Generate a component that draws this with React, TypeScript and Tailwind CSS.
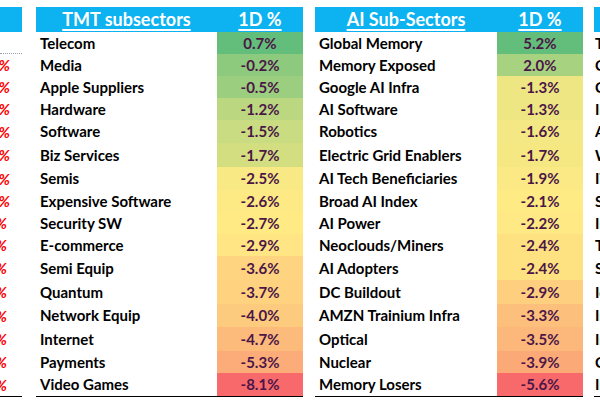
const heights = [22, 22, 22, 22, 23, 24, 23, 22, 22, 22, 24, 24, 23, 24, 22, 23];

const tmt: [string, number][] = [
  ["Telecom", 0.7],
  ["Media", -0.2],
  ["Apple Suppliers", -0.5],
  ["Hardware", -1.2],
  ["Software", -1.5],
  ["Biz Services", -1.7],
  ["Semis", -2.5],
  ["Expensive Software", -2.6],
  ["Security SW", -2.7],
  ["E-commerce", -2.9],
  ["Semi Equip", -3.6],
  ["Quantum", -3.7],
  ["Network Equip", -4.0],
  ["Internet", -4.7],
  ["Payments", -5.3],
  ["Video Games", -8.1],
];

const ai: [string, number][] = [
  ["Global Memory", 5.2],
  ["Memory Exposed", 2.0],
  ["Google AI Infra", -1.3],
  ["AI Software", -1.3],
  ["Robotics", -1.6],
  ["Electric Grid Enablers", -1.7],
  ["AI Tech Beneficiaries", -1.9],
  ["Broad AI Index", -2.1],
  ["AI Power", -2.2],
  ["Neoclouds/Miners", -2.4],
  ["AI Adopters", -2.4],
  ["DC Buildout", -2.9],
  ["AMZN Trainium Infra", -3.3],
  ["Optical", -3.5],
  ["Nuclear", -3.9],
  ["Memory Losers", -5.6],
];

const rightWords = ["Tech", "Cloud", "Chips", "Infra", "AI", "Web", "IT", "SaaS", "Internet", "Telco", "Semis", "IoT", "Infra", "Infra", "Cyber", "Infra"];
const leftPct = ["", "-1.2%", "-0.9%", "-1.4%", "-1.1%", "-2.0%", "-1.8%", "-2.2%", "-2.4%", "-2.6%", "-2.7%", "-3.0%", "-3.1%", "-3.3%", "-3.6%", "-4.2%"];

const GREEN = [99, 190, 123];
const YELLOW = [255, 235, 132];
const RED = [248, 105, 107];

// Excel style 3-colour scale: min red, median yellow, max green
function scaleColor(v: number, values: number[]) {
  const sorted = [...values].sort((a, b) => a - b);
  const n = sorted.length;
  const mid = n % 2 ? sorted[(n - 1) / 2] : (sorted[n / 2 - 1] + sorted[n / 2]) / 2;
  const min = sorted[0];
  const max = sorted[n - 1];
  let to = GREEN;
  let t = 0;
  if (v >= mid) {
    t = max === mid ? 0 : (v - mid) / (max - mid);
  } else {
    to = RED;
    t = (mid - v) / (mid - min);
  }
  const c = YELLOW.map((f, i) => Math.round(f + (to[i] - f) * t));
  return `rgb(${c[0]},${c[1]},${c[2]})`;
}

function Table({ title, rows, nameW, valW }: { title: string; rows: [string, number][]; nameW: string; valW: string }) {
  const values = rows.map((r) => r[1]);
  return (
    <div className="flex flex-col border-b border-black">
      <div className="flex h-[25px] bg-[#0db2f0] text-white font-bold text-[18px] leading-[25px]">
        <div className={`${nameW} text-center`}>
          <span className="underline underline-offset-[3px] decoration-[1.5px]">{title}</span>
        </div>
        <div className={`${valW} text-center`}>
          <span className="underline underline-offset-[3px] decoration-[1.5px]">1D %</span>
        </div>
      </div>
      {rows.map(([name, v], i) => (
        <div key={name} className="flex" style={{ height: heights[i] }}>
          <div className={`${nameW} pl-[4px] flex items-center text-[15px] font-bold text-black whitespace-nowrap`}>{name}</div>
          <div
            className={`${valW} flex items-center justify-center text-[15px] font-bold text-[#4b1647]`}
            style={{ backgroundColor: scaleColor(v, values) }}
          >
            {v.toFixed(1)}%
          </div>
        </div>
      ))}
    </div>
  );
}

export default function App() {
  return (
    <div className="w-[600px] h-[400px] bg-white overflow-hidden pt-[7px] flex items-start" style={{ fontFamily: "Lato, 'Liberation Sans', sans-serif" }}>
      {/* clipped table on the left */}
      <div className="w-[22px] shrink-0 flex flex-col border-b border-black">
        <div className="h-[25px] bg-[#0db2f0]" />
        {leftPct.map((p, i) => (
          <div
            key={i}
            className={`relative overflow-hidden ${i === 0 ? "border-b border-dotted border-gray-400" : ""}`}
            style={{ height: heights[i] }}
          >
            <span
              className={`absolute top-1/2 -translate-y-1/2 text-[15px] italic font-bold text-[#ff0000] whitespace-nowrap ${i < 8 ? "right-[12px]" : "right-[15px]"}`}
            >
              {p}
            </span>
          </div>
        ))}
      </div>

      <div className="ml-[14px] shrink-0">
        <Table title="TMT subsectors" rows={tmt} nameW="w-[181px]" valW="w-[86px]" />
      </div>

      <div className="ml-[12px] shrink-0">
        <Table title="AI Sub-Sectors" rows={ai} nameW="w-[182px]" valW="w-[86px]" />
      </div>

      {/* clipped table on the right */}
      <div className="ml-[11px] w-[6px] shrink-0 overflow-hidden flex flex-col border-b border-black">
        <div className="h-[25px] bg-[#0db2f0]" />
        {rightWords.map((w, i) => (
          <div key={i} className="flex items-center pl-[1px] text-[15px] font-bold text-black whitespace-nowrap" style={{ height: heights[i] }}>
            {w}
          </div>
        ))}
      </div>
    </div>
  );
}
